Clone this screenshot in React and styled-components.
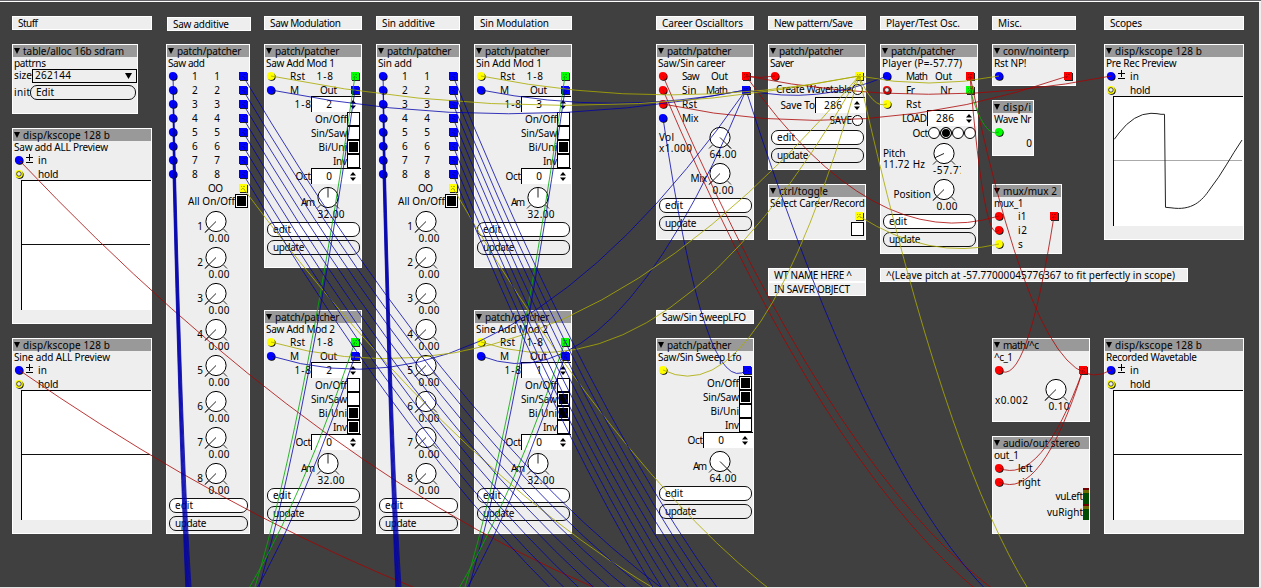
import React, { useLayoutEffect, useRef, useState } from "react";
import styled, { createGlobalStyle, css } from "styled-components";

const GlobalStyle = createGlobalStyle`
  *, *::before, *::after { box-sizing: border-box; }
  html, body { margin: 0; padding: 0; overflow: hidden; background: #404040; }
`;

const Patch = styled.main`
  position: relative;
  width: 1261px;
  height: 588px;
  overflow: hidden;
  background: #404040;
  box-shadow: inset 0 1px #66666a, inset 0 2px #fff, inset 0 -1px #e4e4e4, inset -2px 0 #eee;
  font: 10px/11px "Noto Sans", "Open Sans", sans-serif;
  color: #000;
  white-space: pre;
`;

const placed = css`
  position: absolute;
  left: ${(p) => p.$x}px;
  top: ${(p) => p.$y}px;
  width: ${(p) => p.$w}px;
`;

const Note = styled.div`
  ${placed}
  height: 14px;
  padding-left: 5px;
  line-height: 12px;
  border: 1px solid #fff;
  background: #eee;
`;

const Box = styled.section`
  ${placed}
  height: ${(p) => p.$h}px;
  display: flex;
  flex-direction: column;
  border: 1px solid #fff;
  background: #eee;
`;

const Title = styled.header`
  flex: none;
  display: flex;
  align-items: center;
  gap: 3px;
  height: 12px;
  padding-left: 1px;
  background: #999;
  svg { flex: none; }
`;

const Name = styled.div`
  flex: none;
  height: 11px;
  padding-left: 1px;
  line-height: 12px;
`;

const Port = styled.div`
  flex: none;
  display: flex;
  align-items: center;
  height: 14px;
  padding: 2px ${(p) => p.$inset ?? 1}px 0 1px;
  svg { flex: none; }
`;

const InLabel = styled.span`
  margin-left: ${(p) => (p.$signed ? 5 : 14)}px;
`;

const OutLabel = styled.span`
  margin-left: auto;
  margin-right: ${(p) => p.$gap ?? 13}px;
`;

const Spacer = styled.span`
  margin-left: auto;
`;

const Control = styled.div`
  flex: none;
  display: flex;
  justify-content: flex-end;
  align-items: center;
  height: ${(p) => p.$h}px;
  padding-right: ${(p) => p.$r ?? 0}px;
`;

const CheckBox = styled.i`
  flex: none;
  width: 13px;
  height: 14px;
  border: 1px solid #000;
  background: ${(p) => (p.$on ? "#000" : "#fff")};
  box-shadow: inset 0 0 0 1px #fff;
`;

const Round = styled.i`
  flex: none;
  width: ${(p) => p.$d ?? 12}px;
  height: ${(p) => p.$d ?? 12}px;
  border: 1px solid #000;
  border-radius: 50%;
  background: ${(p) => (p.$on ? "#000" : "#fff")};
  box-shadow: inset 0 0 0 1px #fff;
`;

const SpinBox = styled.div`
  flex: none;
  display: flex;
  align-items: center;
  justify-content: space-between;
  width: 50px;
  height: 16px;
  padding: 0 5px 0 0;
  border: solid #000;
  border-width: 1px 0 0 1px;
  background: #fff;
`;

const SpinValue = styled.span`
  width: 34px;
  text-align: center;
`;

const Button = styled.button`
  flex: none;
  display: block;
  height: 15px;
  margin: ${(p) => p.$m ?? "2px 1px 1px 2px"};
  padding: 0 0 0 5px;
  text-align: left;
  border: 1px solid #111;
  border-radius: 7px;
  background: ${(p) => (p.$bright ? "#fff" : "#eee")};
  font: inherit;
  line-height: 13px;
  color: #000;
  flex-grow: ${(p) => (p.$grow ? 1 : 0)};
`;

const Select = styled.div`
  flex: 1;
  display: flex;
  justify-content: space-between;
  align-items: center;
  height: 14px;
  padding: 0 4px 0 2px;
  border: 1px solid #000;
`;

const Field = styled.div`
  flex: none;
  display: flex;
  align-items: center;
  height: 15px;
  margin-top: ${(p) => p.$top ?? 0}px;
  padding: 0 ${(p) => p.$r ?? 0}px 0 1px;
`;

const Scope = styled.div`
  flex: none;
  height: 130px;
  margin-left: 8px;
  border: solid #000;
  border-width: 1px 0 0 1px;
  background: #fff;
  svg { display: block; }
`;

const DialRow = styled.div`
  flex: none;
  display: flex;
  height: 36px;
  padding-right: 17px;
`;

const DialCaption = styled.div`
  flex: 1;
  padding: ${(p) => (p.$left ? "8px 0 0 2px" : "13px 1px 0 0")};
  text-align: ${(p) => (p.$left ? "left" : "right")};
`;

const DialFace = styled.div`
  flex: none;
  width: 28px;
  display: flex;
  flex-direction: column;
  svg { display: block; flex: none; overflow: visible; }
`;

const DialValue = styled.div`
  display: flex;
  justify-content: ${(p) => (p.$clip ? "flex-start" : "center")};
  height: ${(p) => (p.$clip ? 12 : 11)}px;
  margin-left: 1px;
  margin-right: -1px;
  overflow: ${(p) => (p.$clip ? "hidden" : "visible")};
`;

const Vu = styled.i`
  flex: none;
  width: 6px;
  height: 16px;
  background: linear-gradient(#700000 2px, #706800 2px 5px, #004c00 5px);
`;

const CableLayer = styled.svg`
  position: absolute;
  left: 0;
  top: 2px;
  pointer-events: none;
`;

const Run = styled.span`
  display: inline-block;
  flex: none;
`;

/* advance widths, in pixels, of the labels on the canvas */
const WIDTHS = {
  Stuff: 20, "Saw additive": 56, "Saw Modulation": 71, "Sin additive": 53,
  "Sin Modulation": 69, "Career Oscialltors": 81, "New pattern/Save": 79,
  "Player/Test Osc.": 74, "Misc.": 24, Scopes: 32, "WT NAME HERE ^": 78,
  "IN SAVER OBJECT": 76, "Saw/Sin SweepLFO": 84,
  "^(Leave pitch at -57.77000045776367 to fit perfectly in scope)": 289,
  "table/alloc 16b sdram": 101, "disp/kscope 128 b": 87, "patch/patcher": 64.5,
  "conv/nointerp": 66, "disp/i": 28, "mux/mux 2": 54, "math/^c": 36,
  "audio/out stereo": 77, "ctrl/toggle": 49,
  pattrns: 32, "Saw add ALL Preview": 94, "Sine add ALL Preview": 96,
  "Saw add": 37, "Saw Add Mod 1": 69, "Saw Add Mod 2": 69, "Sin add": 34,
  "Sin Add Mod 1": 66, "Sine Add Mod 2": 72, "Saw/Sin career": 67.5, Saver: 24,
  "Player (P=-57.77)": 80, "Rst NP!": 32.5, "Wave Nr": 37.5,
  "Pre Rec Preview": 70.5, "Recorded Wavetable": 91, mux_1: 29.5, "^c_1": 19,
  out_1: 25, "Saw/Sin Sweep Lfo": 83.5, "Select Career/Record": 95,
  size: 18, init: 16, 262144: 36, Edit: 18, in: 9, hold: 20.5, Rst: 15,
  "1-8": 16.5, Out: 17, "On/Off": 32, "Sin/Saw": 36, "Bi/Uni": 28.5, Inv: 14,
  Oct: 15.5, Am: 14, "32.00": 27, "64.00": 27, edit: 18, update: 31.5,
  "All On/Off": 47, OO: 15, "0.00": 21, "0.10": 21, Saw: 17.5, Sin: 14.5, Math: 22,
  Mix: 16.5, Vol: 15, "x1.000": 33, "x0.002": 33, "Create Wavetable": 76,
  "Save To": 34.5, 286: 18, SAVE: 22.5, LOAD: 25, Fr: 9, Pitch: 22.5,
  "11.72 Hz": 42, Position: 37.5, i1: 8.5, i2: 9, left: 14.5, right: 22.5,
  vuLeft: 27.5, vuRight: 36, "-57.77": 32,
};

/* spreads the glyphs of a label over its advance width */
const T = ({ children }) => {
  const ref = useRef(null);
  const [gap, setGap] = useState(0);
  const target = WIDTHS[children];
  useLayoutEffect(() => {
    if (!target) return;
    const el = ref.current;
    el.style.letterSpacing = "0px";
    el.style.marginRight = "0px";
    const natural = el.getBoundingClientRect().width;
    const next = (target - natural) / (children.length - 1);
    el.style.letterSpacing = `${next}px`;
    el.style.marginRight = `${-next}px`;
    setGap(next);
  }, [children, target]);
  return (
    <Run ref={ref} style={{ letterSpacing: `${gap}px`, marginRight: `${-gap}px` }}>
      {children}
    </Run>
  );
};

const HUES = { b: "#00f", r: "#f00", y: "#ff0", g: "#0f0" };

const InDot = ({ c, open }) => (
  <svg width="10" height="10" viewBox="0 0 10 10">
    <circle cx="5.7" cy="5.8" r="3.9" fill="#000" />
    <circle cx="4.9" cy="4.9" r="4" fill={HUES[c]} />
    {open && <circle cx="4.9" cy="4.9" r="2.3" fill="#eee" stroke="#222" strokeWidth="0.8" />}
  </svg>
);

const OutSquare = ({ c }) => (
  <svg width="10" height="10" viewBox="0 0 10 10" shapeRendering="crispEdges">
    <path d="M2 2h8v8h-8z" fill="#222" />
    <path d="M1 1h8v8h-8z" fill={HUES[c]} />
    <path d="M3 3h1v1h-1zM5 3h2v1h-2zM3 6h1v1h-1zM6 6h1v1h-1zM4 5h1v1h-1z" fill="#000" fillOpacity="0.3" />
  </svg>
);

const PlusMinus = () => (
  <svg width="7" height="14" viewBox="0 0 7 14" shapeRendering="crispEdges">
    <path d="M0 4.5h7M3.5 1v7M0 9.5h7" stroke="#000" fill="none" />
  </svg>
);

const Triangle = ({ w = 6, h = 6 }) => (
  <svg width={w} height={h} viewBox="0 0 6 6" preserveAspectRatio="none">
    <path d="M0 0h6L3 6z" />
  </svg>
);

const Sign = styled.span`
  display: flex;
  margin-left: 2px;
`;

const Io = ({ i, o, li, lo, open, signed, gap, inset }) => (
  <Port $inset={inset}>
    {i && <InDot c={i} open={open} />}
    {signed && (
      <Sign>
        <PlusMinus />
      </Sign>
    )}
    {li && <InLabel $signed={signed}><T>{li}</T></InLabel>}
    {lo ? <OutLabel $gap={gap}><T>{lo}</T></OutLabel> : <Spacer />}
    {o && <OutSquare c={o} />}
  </Port>
);

const Node = ({ x, y, w, h, title, name, children }) => (
  <Box $x={x} $y={y} $w={w} $h={h}>
    <Title>
      <Triangle />
      <T>{title}</T>
    </Title>
    <Name><T>{name}</T></Name>
    {children}
  </Box>
);

const Check = ({ label, on }) => (
  <Control $h={14} $r={1}>
    {label && <T>{label}</T>}
    <CheckBox $on={on} />
  </Control>
);

const Spin = ({ label, value }) => (
  <Control $h={16}>
    <T>{label}</T>
    <SpinBox>
      <SpinValue><T>{value}</T></SpinValue>
      <svg width="6" height="9" viewBox="0 0 6 9">
        <path d="M3 0l3 3.4H0zM3 9l3-3.4H0z" />
      </svg>
    </SpinBox>
  </Control>
);

const Momentary = ({ label }) => (
  <Control $h={15} $r={2}>
    <T>{label}</T>
    <Round $d={11} />
  </Control>
);

const Dial = ({ label, lines, value, angle = -135, clip }) => {
  const a = (angle * Math.PI) / 180;
  const len = Math.abs(angle) > 130 ? 15.5 : 10;
  const nx = 12 + Math.sin(a) * len;
  const ny = 13.5 - Math.cos(a) * len;
  return (
    <DialRow>
      <DialCaption $left={!!lines}>
        {lines ? lines.map((l) => <div key={l}><T>{l}</T></div>) : <T>{label}</T>}
      </DialCaption>
      <DialFace>
        <svg width="26" height="25" viewBox="0 0 26 25">
          <circle cx="12" cy="13.5" r="10.1" fill="#fff" stroke="#000" strokeWidth="1" />
          <path d="M4.5 21L1 24.5M19.5 21L23 24.5" stroke="#333" />
          <path d={`M12 13.5L${nx} ${ny}`} stroke="#222" />
        </svg>
        <DialValue $clip={clip}><T>{value}</T></DialValue>
      </DialFace>
    </DialRow>
  );
};

const EditUpdate = () => (
  <>
    <Button $bright><T>edit</T></Button>
    <Button><T>update</T></Button>
  </>
);

const KScope = ({ x, y, name, children }) => (
  <Node x={x} y={y} w={140} h={196} title="disp/kscope 128 b" name={name}>
    <Io i="b" li="in" signed />
    <Io i="y" li="hold" open />
    <Scope>
      <svg width="129" height="129" viewBox="0 0 129 129" fill="none">
        {children || <path d="M0 63.5h128" stroke="#111" />}
      </svg>
    </Scope>
  </Node>
);

const Adder = ({ x, name }) => (
  <Node x={x} y={44} w={84} h={490} title="patch/patcher" name={name}>
    {[1, 2, 3, 4, 5, 6, 7, 8].map((n) => (
      <Io key={n} i="b" o="b" li={`${n}`} lo={`${n}`} gap={18} />
    ))}
    <Io lo="OO" o="y" gap={15} />
    <Check label="All On/Off" on />
    {[1, 2, 3, 4, 5, 6, 7, 8].map((n) => (
      <Dial key={n} label={`${n}`} value="0.00" />
    ))}
    <EditUpdate />
  </Node>
);

const CHECKS = ["On/Off", "Sin/Saw", "Bi/Uni", "Inv"];

const Modulator = ({ x, y, name, index, checks }) => (
  <Node x={x} y={y} w={98} h={224} title="patch/patcher" name={name}>
    <Io i="y" o="g" li="Rst" lo="1-8" gap={17} />
    <Io i="b" o="b" li="M" lo="Out" />
    <Spin label="1-8" value={index} />
    {CHECKS.map((c, k) => (
      <Check key={c} label={c} on={checks[k]} />
    ))}
    <Spin label="Oct" value="0" />
    <Dial label="Am" value="32.00" angle={0} />
    <EditUpdate />
  </Node>
);

const STROKES = {
  b: "rgba(0,0,170,0.78)",
  r: "rgba(170,0,0,0.78)",
  y: "rgba(170,170,0,0.82)",
  g: "rgba(0,170,0,0.82)",
};

/* [hue, x1, y1, x2, y2]; every cable sags below its lower end */
const CABLES = [
  ["r", 746, 76, 775, 76],
  ["r", 746, 76, 999, 216],
  ["r", 746, 76, 1111, 76],
  ["r", 1068, 76, 663, 104],
  ["r", 970, 76, 999, 230],
  ["r", 970, 76, 1111, 370],
  ["r", 1054, 216, 999, 370],
  ["r", 1083, 370, 999, 468],
  ["r", 1083, 370, 999, 482],
  ["r", 663, 76, 1233, 633],
  ["r", 663, 90, 1233, 647],
  ["r", 19, 160, 1240, 636],
  ["r", 19, 370, 1309, 660],
  ["b", 746, 90, 887, 76],
  ["b", 746, 90, 271, 90],
  ["b", 746, 90, 481, 90],
  ["b", 746, 90, 271, 356],
  ["b", 746, 90, 481, 356],
  ["b", 746, 90, 1157, 638],
  ["b", 747, 370, 663, 118],
  ["y", 859, 76, 271, 76],
  ["y", 859, 76, 481, 76],
  ["y", 859, 76, 271, 342],
  ["y", 859, 76, 481, 342],
  ["y", 859, 76, 663, 370],
  ["y", 859, 76, 887, 104],
  ["y", 859, 76, 999, 76],
  ["y", 859, 76, 1159, 656],
  ["y", 859, 216, 999, 244],
  ["y", 243, 188, 1144, 660],
  ["y", 453, 188, 1155, 678],
  ["g", 970, 90, 999, 132],
  ...[0, 210].flatMap((d) => [
    ["g", 355 + d, 76, 140 + d, 731],
    ["b", 355 + d, 90, 140 + d, 745],
    ["g", 355 + d, 342, 65 + d, 704],
    ["b", 355 + d, 356, 65 + d, 718],
  ]),
  ...[0, 1, 2, 3, 4, 5, 6, 7].flatMap((i) => {
    const k = 14 * i;
    return [
      ["b", 173, 76 + k, 204, 659 + k],
      ["b", 383, 76 + k, 414, 659 + k],
      ["b", 243, 76 + k, 1151, 691 + k],
      ["b", 453, 76 + k, 1165, 811 + k],
    ];
  }),
];

const sag = (x1, y1, x2, y2) =>
  Math.max(y1, y2) + Math.abs(y2 - y1) * 0.1 + Math.abs(x2 - x1) * 0.1;

const Cables = () => (
  <CableLayer width="1259" height="585" viewBox="0 2 1259 585" fill="none">
    {CABLES.map(([c, x1, y1, x2, y2], n) => (
      <path
        key={n}
        stroke={STROKES[c]}
        d={`M${x1} ${y1}Q${(x1 + x2) / 2} ${sag(x1, y1, x2, y2)} ${x2} ${y2}`}
      />
    ))}
  </CableLayer>
);

const NOTES = [
  [12, 16, 140, "Stuff"],
  [167, 17, 84, "Saw additive"],
  [264, 16, 98, "Saw Modulation"],
  [376, 16, 84, "Sin additive"],
  [474, 16, 98, "Sin Modulation"],
  [656, 16, 98, "Career Oscialltors"],
  [768, 16, 98, "New pattern/Save"],
  [880, 16, 98, "Player/Test Osc."],
  [992, 16, 84, "Misc."],
  [1104, 16, 140, "Scopes"],
  [768, 268, 98, "WT NAME HERE ^"],
  [768, 282, 98, "IN SAVER OBJECT"],
  [880, 268, 308, "^(Leave pitch at -57.77000045776367 to fit perfectly in scope)"],
  [656, 310, 98, "Saw/Sin SweepLFO"],
];

export default function App() {
  return (
    <>
      <GlobalStyle />
      <Patch>
        {NOTES.map(([x, y, w, text]) => (
          <Note key={text} $x={x} $y={y} $w={w}>
            <T>{text}</T>
          </Note>
        ))}

        <Node x={12} y={44} w={126} h={70} title="table/alloc 16b sdram" name="pattrns">
          <Field>
            <T>size</T>
            <Select>
              <T>262144</T>
              <Triangle w={7} />
            </Select>
          </Field>
          <Field $top={2} $r={1}>
            <T>init</T>
            <Button $grow $m="0"><T>Edit</T></Button>
          </Field>
        </Node>

        <KScope x={12} y={128} name="Saw add ALL Preview" />
        <KScope x={12} y={338} name="Sine add ALL Preview" />

        <Adder x={166} name="Saw add" />
        <Modulator x={264} y={44} name="Saw Add Mod 1" index="2" checks={[0, 0, 1, 0]} />
        <Modulator x={264} y={310} name="Saw Add Mod 2" index="2" checks={[0, 0, 1, 1]} />
        <Adder x={376} name="Sin add" />
        <Modulator x={474} y={44} name="Sin Add Mod 1" index="3" checks={[0, 0, 1, 0]} />
        <Modulator x={474} y={310} name="Sine Add Mod 2" index="1" checks={[0, 1, 1, 0]} />

        <Node x={656} y={44} w={98} h={196} title="patch/patcher" name="Saw/Sin career">
          <Io i="r" o="r" li="Saw" lo="Out" inset={2} />
          <Io i="r" o="b" li="Sin" lo="Math" inset={2} />
          <Io i="r" li="Rst" />
          <Io i="b" li="Mix" />
          <Dial lines={["Vol", "x1.000"]} value="64.00" angle={135} />
          <Dial label="Mix" value="0.00" />
          <EditUpdate />
        </Node>

        <Node x={656} y={338} w={98} h={196} title="patch/patcher" name="Saw/Sin Sweep Lfo">
          <Io i="y" o="b" />
          {CHECKS.map((c, k) => (
            <Check key={c} label={c} on={k < 2} />
          ))}
          <Spin label="Oct" value="0" />
          <Dial label="Am" value="64.00" angle={135} />
          <EditUpdate />
        </Node>

        <Node x={768} y={44} w={98} h={126} title="patch/patcher" name="Saver">
          <Io i="r" o="y" />
          <Momentary label="Create Wavetable" />
          <Spin label="Save To" value="286" />
          <Momentary label="SAVE" />
          <EditUpdate />
        </Node>

        <Node x={768} y={184} w={98} h={56} title="ctrl/toggle" name="Select Career/Record">
          <Io o="y" />
          <Check on={false} />
        </Node>

        <Node x={880} y={44} w={98} h={210} title="patch/patcher" name="Player (P=-57.77)">
          <Io i="b" o="r" li="Math" lo="Out" inset={2} />
          <Io i="r" o="g" li="Fr" lo="Nr" open inset={2} />
          <Io i="y" li="Rst" />
          <Spin label="LOAD" value="286" />
          <Control $h={14} $r={1}>
            <T>Oct</T>
            <Round />
            <Round $on />
            <Round />
            <Round />
          </Control>
          <Dial lines={["Pitch", "11.72 Hz"]} value="-57.77" angle={-115} clip />
          <Dial label="Position" value="0.00" />
          <EditUpdate />
        </Node>

        <Node x={992} y={44} w={84} h={42} title="conv/nointerp" name="Rst NP!">
          <Io i="b" o="r" inset={2} />
        </Node>

        <Node x={992} y={100} w={42} h={56} title="disp/i" name="Wave Nr">
          <Io i="g" />
          <Control $h={11} $r={1}>0</Control>
        </Node>

        <Node x={992} y={184} w={70} h={70} title="mux/mux 2" name="mux_1">
          <Io i="r" o="r" li="i1" inset={2} />
          <Io i="r" li="i2" />
          <Io i="y" li="s" />
        </Node>

        <Node x={992} y={338} w={98} h={84} title="math/^c" name="^c_1">
          <Io i="r" o="r" />
          <Dial lines={[" ", "x0.002"]} value="0.10" />
        </Node>

        <Node x={992} y={436} w={98} h={98} title="audio/out stereo" name="out_1">
          <Io i="r" li="left" />
          <Io i="r" li="right" />
          <Control $h={16}>
            <T>vuLeft</T>
            <Vu />
          </Control>
          <Control $h={16}>
            <T>vuRight</T>
            <Vu />
          </Control>
        </Node>

        <KScope x={1104} y={44} name="Pre Rec Preview">
          <path d="M0 63.5h128" stroke="#aaa" />
          <path
            d="M0.3 42.3L5 36Q20 16.6 37 16.3Q44 16.5 47 17.3L50.5 17.3L51.5 110.3L57 110.8C78 114 88 104 96 92C108 77 117 59 128 43"
            stroke="#222"
          />
        </KScope>
        <KScope x={1104} y={338} name="Recorded Wavetable" />

        <Cables />
      </Patch>
    </>
  );
}
